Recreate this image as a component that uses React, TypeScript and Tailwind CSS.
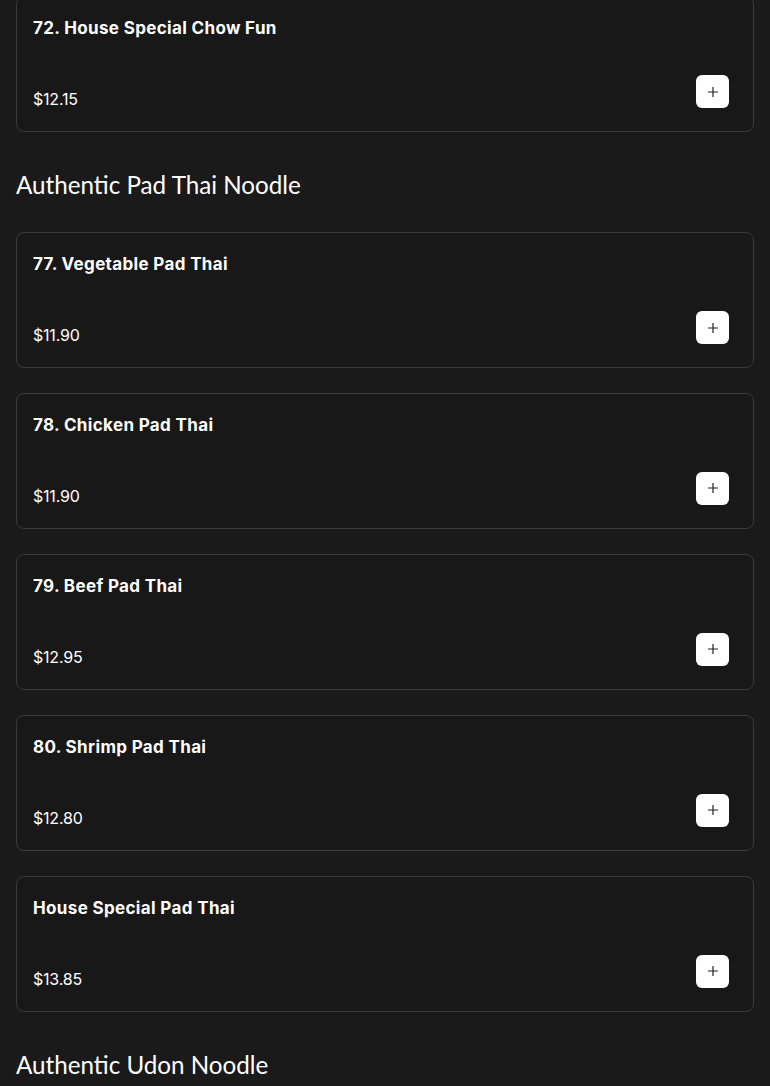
import React from 'react';

type Item = { name: string; price: string };

const sections: { title?: string; items: Item[] }[] = [
  { items: [{ name: '72. House Special Chow Fun', price: '$12.15' }] },
  {
    title: 'Authentic Pad Thai Noodle',
    items: [
      { name: '77. Vegetable Pad Thai', price: '$11.90' },
      { name: '78. Chicken Pad Thai', price: '$11.90' },
      { name: '79. Beef Pad Thai', price: '$12.95' },
      { name: '80. Shrimp Pad Thai', price: '$12.80' },
      { name: 'House Special Pad Thai', price: '$13.85' },
    ],
  },
  { title: 'Authentic Udon Noodle', items: [] },
];

const PlusIcon = () => (
  <svg width="12" height="12" viewBox="0 0 12 12" fill="none" stroke="#222" strokeWidth={1.2}>
    <path d="M6 1v10M1 6h10" />
  </svg>
);

const MenuCard: React.FC<{ item: Item }> = ({ item }) => (
  <div className="rounded-lg border border-[#3b3b3b] bg-[#181818] px-4 pt-[17px] pb-[19px]">
    <div className="text-[17px] font-bold leading-[28px] tracking-[0.35px] text-white" style={{ fontFamily: 'Inter, sans-serif' }}>
      {item.name}
    </div>
    <div className="mt-[33px] flex items-end justify-between">
      <div className="-mb-px text-[16px] leading-[28px] tracking-[-0.2px] text-white" style={{ fontFamily: 'Inter, sans-serif', fontVariantNumeric: 'proportional-nums' }}>
        {item.price}
      </div>
      <button className="mb-1 mr-2 flex h-[33px] w-[33px] items-center justify-center rounded-md bg-white">
        <PlusIcon />
      </button>
    </div>
  </div>
);

export default function App() {
  return (
    <div className="min-h-[1086px] bg-[#1a1a1a] px-4 overflow-hidden">
      <div className="-mt-1">
        {sections.map((s, i) => (
          <div key={i}>
            {s.title && (
              <h2
                className="mt-[37px] mb-[31px] text-[24.2px] leading-8 text-white"
                style={{ fontFamily: 'Lato, sans-serif' }}
              >
                {s.title}
              </h2>
            )}
            <div className="space-y-[24.9px]">
              {s.items.map((it) => (
                <MenuCard key={it.name} item={it} />
              ))}
            </div>
          </div>
        ))}
      </div>
    </div>
  );
}
